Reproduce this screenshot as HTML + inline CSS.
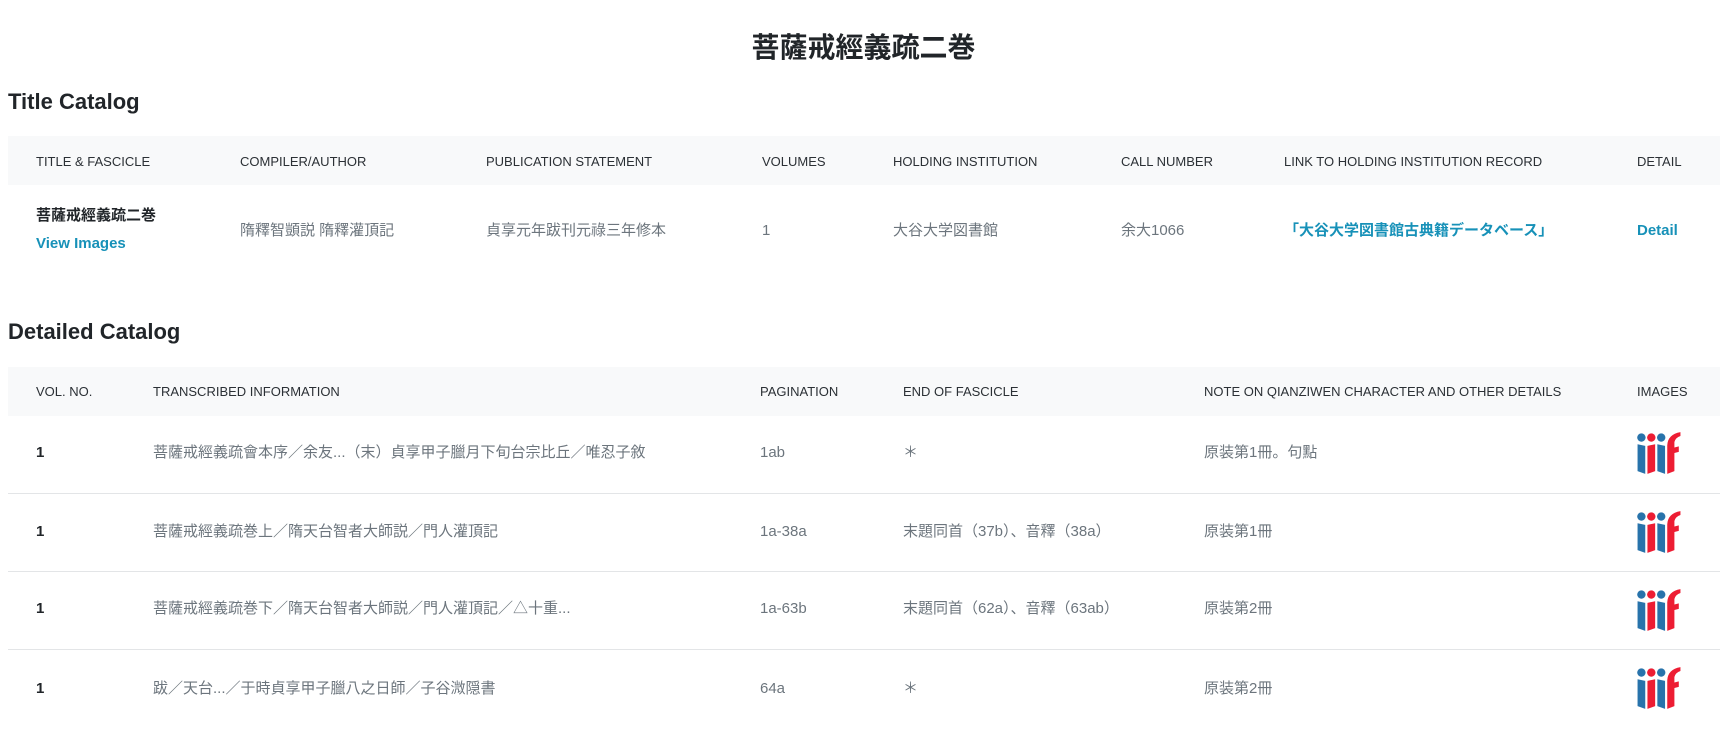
<!DOCTYPE html>
<html><head><meta charset="utf-8"><style>
*{margin:0;padding:0;box-sizing:border-box}
body{width:1727px;height:732px;background:#fff;font-family:"Liberation Sans","Noto Sans CJK JP",sans-serif;color:#6c757d;position:relative;overflow:hidden}
.a{position:absolute;white-space:nowrap}
h1{position:absolute;left:0;width:1727px;text-align:center;top:29px;font-size:28px;font-weight:bold;color:#212529;line-height:38px}
h2{position:absolute;left:8px;font-size:22px;font-weight:bold;color:#212529;line-height:28px}
.band{position:absolute;left:8px;width:1712px;height:49px;background:#f8f9fa}
.th{font-size:13px;color:#2b3035;line-height:16px}
.td{font-size:15px;line-height:20px}
.b{color:#212529;font-weight:bold}
.l{color:#1791b8;font-weight:bold}
.hr{position:absolute;left:8px;width:1712px;height:1px;background:#e3e5e7}
</style></head><body>
<h1>菩薩戒經義疏二巻</h1>
<h2 style="top:88px">Title Catalog</h2>
<div class="band" style="top:136px"></div>
<div class="a th" style="left:36px;top:154px">TITLE &amp; FASCICLE</div>
<div class="a th" style="left:240px;top:154px">COMPILER/AUTHOR</div>
<div class="a th" style="left:486px;top:154px">PUBLICATION STATEMENT</div>
<div class="a th" style="left:762px;top:154px">VOLUMES</div>
<div class="a th" style="left:893px;top:154px">HOLDING INSTITUTION</div>
<div class="a th" style="left:1121px;top:154px">CALL NUMBER</div>
<div class="a th" style="left:1284px;top:154px">LINK TO HOLDING INSTITUTION RECORD</div>
<div class="a th" style="left:1637px;top:154px">DETAIL</div>
<div class="a td b" style="left:36px;top:206px">菩薩戒經義疏二巻</div>
<div class="a td l" style="left:36px;top:234px">View Images</div>
<div class="a td" style="left:240px;top:221px">隋釋智顗説 隋釋灌頂記</div>
<div class="a td" style="left:486px;top:221px">貞享元年跋刊元祿三年修本</div>
<div class="a td" style="left:762px;top:221px">1</div>
<div class="a td" style="left:893px;top:221px">大谷大学図書館</div>
<div class="a td" style="left:1121px;top:221px">余大1066</div>
<div class="a td l" style="left:1284px;top:221px">「大谷大学図書館古典籍データベース」</div>
<div class="a td l" style="left:1637px;top:221px">Detail</div>

<h2 style="top:318px">Detailed Catalog</h2>
<div class="band" style="top:367px"></div>
<div class="a th" style="left:36px;top:384px">VOL. NO.</div>
<div class="a th" style="left:153px;top:384px">TRANSCRIBED INFORMATION</div>
<div class="a th" style="left:760px;top:384px">PAGINATION</div>
<div class="a th" style="left:903px;top:384px">END OF FASCICLE</div>
<div class="a th" style="left:1204px;top:384px">NOTE ON QIANZIWEN CHARACTER AND OTHER DETAILS</div>
<div class="a th" style="left:1637px;top:384px">IMAGES</div>

<div class="a td b" style="left:36px;top:443px">1</div>
<div class="a td" style="left:153px;top:443px">菩薩戒經義疏會本序／余友...（末）貞享甲子臘月下旬台宗比丘／唯忍子敘</div>
<div class="a td" style="left:760px;top:443px">1ab</div>
<div class="a td" style="left:903px;top:443px">＊</div>
<div class="a td" style="left:1204px;top:443px">原装第1冊。句點</div>
<div class="hr" style="top:493px"></div>

<div class="a td b" style="left:36px;top:522px">1</div>
<div class="a td" style="left:153px;top:522px">菩薩戒經義疏巻上／隋天台智者大師説／門人灌頂記</div>
<div class="a td" style="left:760px;top:522px">1a-38a</div>
<div class="a td" style="left:903px;top:522px">末題同首（37b）、音釋（38a）</div>
<div class="a td" style="left:1204px;top:522px">原装第1冊</div>
<div class="hr" style="top:571px"></div>

<div class="a td b" style="left:36px;top:599px">1</div>
<div class="a td" style="left:153px;top:599px">菩薩戒經義疏巻下／隋天台智者大師説／門人灌頂記／△十重...</div>
<div class="a td" style="left:760px;top:599px">1a-63b</div>
<div class="a td" style="left:903px;top:599px">末題同首（62a）、音釋（63ab）</div>
<div class="a td" style="left:1204px;top:599px">原装第2冊</div>
<div class="hr" style="top:649px"></div>

<div class="a td b" style="left:36px;top:679px">1</div>
<div class="a td" style="left:153px;top:679px">跋／天台...／于時貞享甲子臘八之日師／子谷溦隠書</div>
<div class="a td" style="left:760px;top:679px">64a</div>
<div class="a td" style="left:903px;top:679px">＊</div>
<div class="a td" style="left:1204px;top:679px">原装第2冊</div>

<svg width="0" height="0" style="position:absolute"><defs>
<g id="iiif">
<circle cx="4" cy="5" r="3.8" fill="#2873ab"/><path d="M0.5 11 L7.5 12.5 L7.5 38 L0.5 35.5Z" fill="#2873ab"/>
<circle cx="13" cy="5" r="3.8" fill="#ed1d33"/><path d="M9.5 12.5 L16.5 11 L16.5 35.5 L9.5 38Z" fill="#ed1d33"/>
<circle cx="22" cy="5" r="3.8" fill="#2873ab"/><path d="M18.5 11 L25.5 12.5 L25.5 38 L18.5 35.5Z" fill="#2873ab"/>
<path d="M27.5 12 L27.5 38 L34 35.5 L34 19 L38 18 L38 13 L34 14 L34 9 Q35 5 39.5 3.5 L39.5 0 Q28 2 27.5 12Z" fill="#ed1d33"/>
</g></defs></svg>
<svg class="a" style="left:1637px;top:432px" width="44" height="42" viewBox="0 0 40 38"><use href="#iiif"/></svg>
<svg class="a" style="left:1637px;top:511px" width="44" height="42" viewBox="0 0 40 38"><use href="#iiif"/></svg>
<svg class="a" style="left:1637px;top:589px" width="44" height="42" viewBox="0 0 40 38"><use href="#iiif"/></svg>
<svg class="a" style="left:1637px;top:667px" width="44" height="42" viewBox="0 0 40 38"><use href="#iiif"/></svg>
</body></html>
